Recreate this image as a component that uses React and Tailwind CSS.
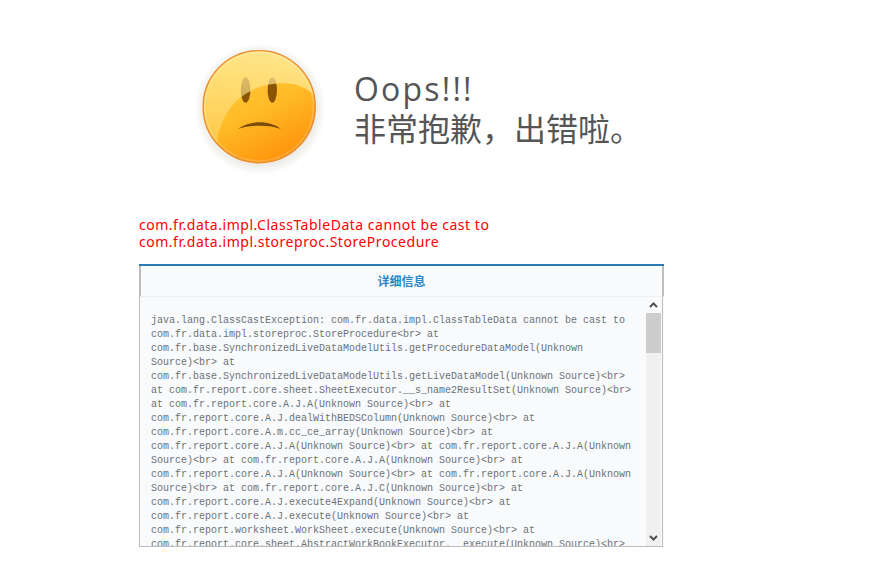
const traceLines = [
  "java.lang.ClassCastException: com.fr.data.impl.ClassTableData cannot be cast to",
  "com.fr.data.impl.storeproc.StoreProcedure<br> at",
  "com.fr.base.SynchronizedLiveDataModelUtils.getProcedureDataModel(Unknown",
  "Source)<br> at",
  "com.fr.base.SynchronizedLiveDataModelUtils.getLiveDataModel(Unknown Source)<br>",
  "at com.fr.report.core.sheet.SheetExecutor.__s_name2ResultSet(Unknown Source)<br>",
  "at com.fr.report.core.A.J.A(Unknown Source)<br> at",
  "com.fr.report.core.A.J.dealWithBEDSColumn(Unknown Source)<br> at",
  "com.fr.report.core.A.m.cc_ce_array(Unknown Source)<br> at",
  "com.fr.report.core.A.J.A(Unknown Source)<br> at com.fr.report.core.A.J.A(Unknown",
  "Source)<br> at com.fr.report.core.A.J.A(Unknown Source)<br> at",
  "com.fr.report.core.A.J.A(Unknown Source)<br> at com.fr.report.core.A.J.A(Unknown",
  "Source)<br> at com.fr.report.core.A.J.C(Unknown Source)<br> at",
  "com.fr.report.core.A.J.execute4Expand(Unknown Source)<br> at",
  "com.fr.report.core.A.J.execute(Unknown Source)<br> at",
  "com.fr.report.worksheet.WorkSheet.execute(Unknown Source)<br> at",
  "com.fr.report.core.sheet.AbstractWorkBookExecutor.__execute(Unknown Source)<br>",
];

function SadFace() {
  return (
    <svg width="140" height="140" viewBox="0 0 140 140" className="shrink-0">
      <defs>
        <linearGradient id="base" x1="0.3" y1="0.05" x2="0.75" y2="0.95">
          <stop offset="0" stopColor="#ffcb3c" />
          <stop offset="0.5" stopColor="#ffbc28" />
          <stop offset="1" stopColor="#ff930c" />
        </linearGradient>
        <linearGradient id="gloss" x1="0.45" y1="0" x2="0.2" y2="1">
          <stop offset="0" stopColor="#ffeb9a" stopOpacity="0.85" />
          <stop offset="1" stopColor="#ffe68c" stopOpacity="0.35" />
        </linearGradient>
        <radialGradient id="shadow" cx="0.5" cy="0.5" r="0.5">
          <stop offset="0.8" stopColor="#8a8468" stopOpacity="0.2" />
          <stop offset="1" stopColor="#8a8468" stopOpacity="0" />
        </radialGradient>
        <clipPath id="faceClip">
          <circle cx="69.2" cy="69.7" r="55.5" />
        </clipPath>
      </defs>
      <circle cx="70" cy="72" r="66" fill="url(#shadow)" />
      <circle cx="69.2" cy="69.7" r="56" fill="url(#base)" stroke="#ec8e2c" strokeWidth="1.5" />
      <ellipse cx="55.6" cy="53" rx="4.8" ry="12.7" fill="#8a5500" />
      <ellipse cx="82.3" cy="53" rx="4.7" ry="12.7" fill="#8a5500" />
      <path d="M48 92 C60 83 80 83 91 92 C80 87.5 60 87.5 48 92 Z" fill="#7a4c08" />
      <path
        d="M13 70 A56 56 0 0 1 125 60 C118 50 105 46 90 46.3 C78 47 66 50 56.7 56.3 C45 63 38 73 33.3 83 C30 90 27.5 98 26.7 106.3 C18 97 13 84 13 70 Z"
        fill="url(#gloss)"
        clipPath="url(#faceClip)"
      />
      <circle cx="69.2" cy="69.7" r="54.2" fill="none" stroke="#fff" strokeOpacity="0.2" strokeWidth="1.5" />
    </svg>
  );
}

function Scrollbar() {
  return (
    <div className="mr-px flex w-[15px] shrink-0 flex-col bg-[#f0f0f0]">
      <div className="flex h-4 items-center justify-center bg-[#f9fafc]">
        <svg width="9" height="6" viewBox="0 0 9 6">
          <path d="M1 5 L4.5 1.5 L8 5" fill="none" stroke="#505050" strokeWidth="2" />
        </svg>
      </div>
      <div className="h-10 bg-[#cdcdcd]" />
      <div className="flex-1" />
      <div className="flex h-4 items-center justify-center">
        <svg width="9" height="6" viewBox="0 0 9 6">
          <path d="M1 1 L4.5 4.5 L8 1" fill="none" stroke="#505050" strokeWidth="2" />
        </svg>
      </div>
    </div>
  );
}

export default function App() {
  return (
    <div className="h-[585px] overflow-hidden bg-white pl-[139px] font-['Noto_Sans',sans-serif]">
      {/* Oops header */}
      <div className="flex h-[216px] items-start pl-[51px] pt-[37px]">
        <SadFace />
        <div className="pl-[24px] pt-[32px] font-['Open_Sans','Noto_Sans_CJK_SC',sans-serif] text-[32px] leading-[40px] text-[#555]">
          <div className="tracking-[2.2px]">Oops!!!</div>
          <div>{"非常抱歉\uFF0C出错啦。"}</div>
        </div>
      </div>

      {/* Message */}
      <div className="w-[370px] text-[14px] leading-[17px] tracking-[0.52px] text-[#ff0000]">
        com.fr.data.impl.ClassTableData cannot be cast to com.fr.data.impl.storeproc.StoreProcedure
      </div>

      {/* Details */}
      <div className="mt-[14px] w-[525px] border-t-2 border-[#2a7cb4] bg-[#f9fafc]">
        <div className="flex h-[31px] items-center justify-center border-x-2 border-b border-x-[#bdbdbd] border-b-[#eeeeee] font-['Noto_Sans_CJK_SC',sans-serif] text-[12px] font-bold text-[#2b86c9]">
          详细信息
        </div>
        <div className="mr-px flex h-[250px] border-x border-b border-[#bdbdbd]">
          <div className="min-w-0 flex-1 overflow-hidden whitespace-nowrap pl-[11px] pt-[17px] font-['Liberation_Mono',monospace] text-[10px] leading-[14px] text-[#6b7276]">
            {traceLines.map((line, i) => (
              <div key={i}>{line}</div>
            ))}
          </div>
          <Scrollbar />
        </div>
      </div>
    </div>
  );
}
